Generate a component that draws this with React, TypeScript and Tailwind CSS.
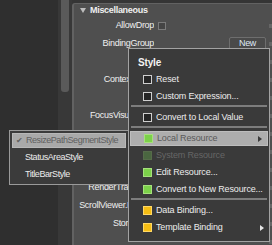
const font = { fontFamily: '"Liberation Sans", Arial, sans-serif' }

type Row = { label: string; value?: 'check' | 'button' }

// rows whose labels sit fully under the open menus are left blank
const rows: Row[] = [
  { label: 'AllowDrop', value: 'check' },
  { label: 'BindingGroup', value: 'button' },
  { label: '' },
  { label: 'ContextMenu' },
  { label: '' },
  { label: 'FocusVisualStyle' },
  { label: '' },
  { label: '' },
  { label: '' },
  { label: 'RenderTransform' },
  { label: 'ScrollViewer.IsDefer' },
  { label: 'Storyboard' },
  { label: '' },
]

function Arrow({ dark }: { dark?: boolean }) {
  return (
    <svg width="4" height="6" viewBox="0 0 4 6" className="ml-auto mr-[5px]">
      <path d="M0 0 L4 3 L0 6 Z" fill={dark ? '#3a3a3a' : '#e6e6e6'} />
    </svg>
  )
}

type Item = {
  text: string
  icon: 'box' | 'green' | 'yellow' | 'dimgreen'
  arrow?: boolean
  active?: boolean
  disabled?: boolean
}

function Icon({ kind }: { kind: Item['icon'] }) {
  if (kind === 'box') return <span className="w-[9px] h-[9px] border border-[#cfcfcf] bg-[#262626]" />
  if (kind === 'green') return <span className="w-[9px] h-[9px] border border-[#a6e07c] bg-[#7cd14a]" />
  if (kind === 'yellow') return <span className="w-[9px] h-[9px] border border-[#ffd866] bg-[#f5bd14]" />
  return <span className="w-[9px] h-[9px] border border-[#566b4a] bg-[#4a6640]" />
}

function MenuItem({ item }: { item: Item }) {
  if (item.active) {
    return (
      <div className="h-[17px] p-px">
        <div className="h-[15px] flex items-center pl-[13px] gap-[4px] bg-[#adadad] border border-[#bdbdbd] text-[#5a5a5a]">
          <Icon kind={item.icon} />
          <span>{item.text}</span>
          {item.arrow && <Arrow dark />}
        </div>
      </div>
    )
  }
  return (
    <div
      className={`h-[17px] flex items-center pl-[14px] gap-[4px] ${
        item.disabled ? 'text-[#666666]' : 'text-[#ececec]'
      }`}
    >
      <Icon kind={item.icon} />
      <span>{item.text}</span>
      {item.arrow && <Arrow />}
    </div>
  )
}

function Sep() {
  return <div className="h-[4px] px-[2px]"><div className="h-[2px] bg-[#7d7d7d]" /></div>
}

export default function App() {
  return (
    <div
      className="relative w-[272px] h-[245px] overflow-hidden flex bg-[#2f2f2f] text-[9px]"
      style={font}
    >
      <div className="w-[58px] shrink-0" />
      <div className="w-[14px] shrink-0 bg-[#383838] flex justify-center">
        <div className="w-[8px] h-[92px] rounded-b-[3px] bg-[#5a5a5a]" />
      </div>
      <div className="flex-1 pt-[3px] bg-[#353535]">
        <div className="h-full rounded-tl-[3px] border-l-2 border-t border-[#626262] bg-[#4f4f4f] text-[#f0f0f0] tracking-[-0.3px]">
          <div className="h-[13px] flex items-center pl-[6px] gap-[4px]">
            <svg width="6" height="5" viewBox="0 0 6 5">
              <path d="M0 0 H6 L3 5 Z" fill="#bdbdbd" />
            </svg>
            <span className="font-bold">Miscellaneous</span>
          </div>
          {rows.map((r, i) => (
            <div key={i} className="h-[18px] flex items-center">
              <div className="w-[80px] pl-[4px] shrink-0 text-right whitespace-nowrap overflow-hidden">
                {r.label}
              </div>
              <div className="flex-1 flex items-center pl-[4px]">
                {r.value === 'check' && (
                  <span className="w-[8px] h-[8px] border border-[#7b7b7b] bg-[#454545]" />
                )}
                {r.value === 'button' && (
                  <span className="ml-auto mr-[3px] w-[37px] h-[14px] rounded-[2px] border border-[#6e6e6e] bg-[#4a4a4a] flex items-center justify-center text-[#dfe8f5]">
                    New
                  </span>
                )}
              </div>
              <span className="w-[4px] h-[4px] bg-[#666666] shrink-0 -mr-px" />
            </div>
          ))}
        </div>
      </div>

      <div className="absolute left-[9px] top-[130px] w-[120px] h-[55px] border border-[#9a9a9a] bg-[#3b3b3b] pt-[1px] px-px text-[#ececec] tracking-[-0.45px]">
        <div className="h-[17px] p-px">
          <div className="h-[15px] flex items-center bg-[#a9a9a9] border border-[#b8b8b8] text-[#606060]">
            <span className="w-[13px] pl-[3px] text-[8px]">✔</span>
            <span>ResizePathSegmentStyle</span>
          </div>
        </div>
        <div className="h-[17px] flex items-center pl-[14px]">StatusAreaStyle</div>
        <div className="h-[17px] flex items-center pl-[14px]">TitleBarStyle</div>
      </div>

      <div className="absolute left-[128px] top-[48px] w-[142px] h-[194px] border border-[#a3a3a3] bg-[#3a3a3a] pt-[5px] tracking-[-0.15px]">
        <div className="h-[17px] flex items-center pl-[9px] font-bold text-[10px] text-[#f2f2f2]">Style</div>
        <MenuItem item={{ text: 'Reset', icon: 'box' }} />
        <MenuItem item={{ text: 'Custom Expression...', icon: 'box' }} />
        <Sep />
        <MenuItem item={{ text: 'Convert to Local Value', icon: 'box' }} />
        <Sep />
        <MenuItem item={{ text: 'Local Resource', icon: 'green', arrow: true, active: true }} />
        <MenuItem item={{ text: 'System Resource', icon: 'dimgreen', disabled: true }} />
        <MenuItem item={{ text: 'Edit Resource...', icon: 'green' }} />
        <MenuItem item={{ text: 'Convert to New Resource...', icon: 'green' }} />
        <Sep />
        <MenuItem item={{ text: 'Data Binding...', icon: 'yellow' }} />
        <MenuItem item={{ text: 'Template Binding', icon: 'yellow', arrow: true }} />
      </div>
    </div>
  )
}
